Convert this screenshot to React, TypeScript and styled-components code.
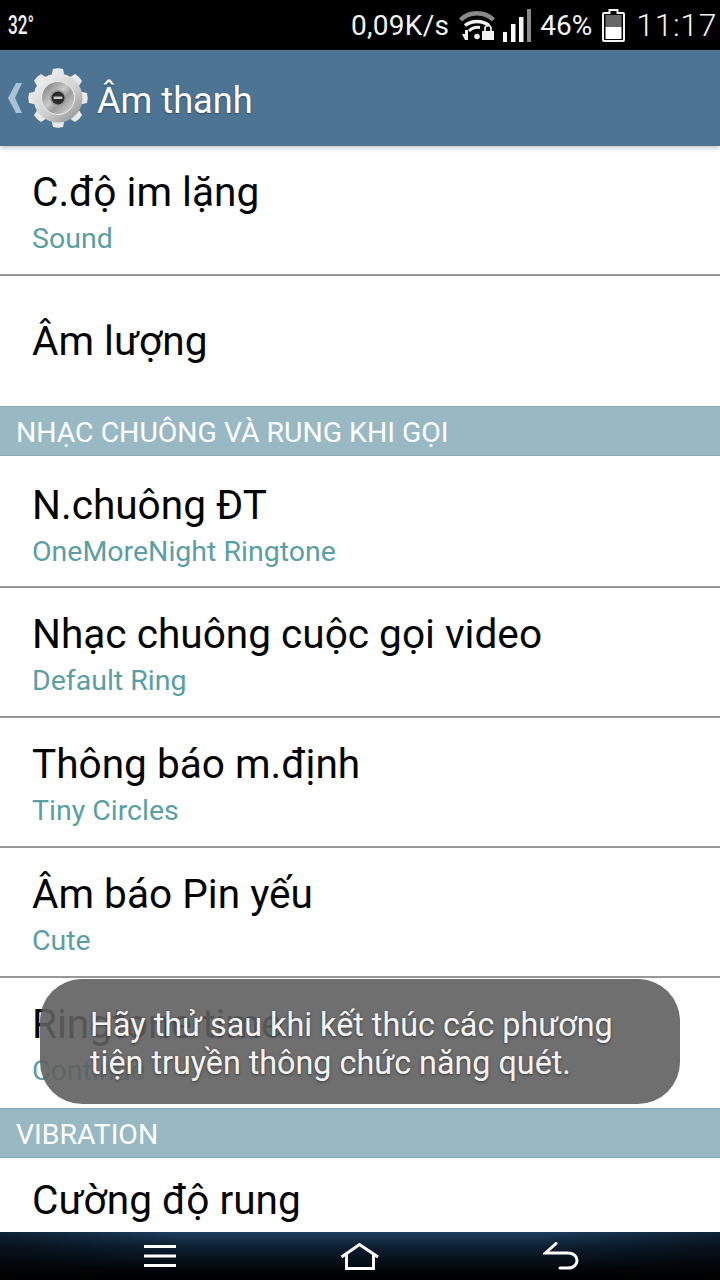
import React from "react";
import styled, { createGlobalStyle } from "styled-components";

const GlobalStyle = createGlobalStyle`
  html, body {
    margin: 0;
    padding: 0;
    background: #fff;
  }
  body {
    font-family: Roboto, "Noto Sans", sans-serif;
  }
`;

const Screen = styled.div`
  position: relative;
  display: flex;
  flex-direction: column;
  width: 720px;
  height: 1280px;
  overflow: hidden;
  background: #fff;
`;

const StatusBar = styled.div`
  display: flex;
  align-items: center;
  height: 50px;
  padding: 0 3px 0 8px;
  box-sizing: border-box;
  background: #000;
  color: #f2f2f2;
`;

const Temperature = styled.span`
  display: inline-block;
  font-size: 26px;
  font-weight: 500;
  transform: scaleX(0.66);
  transform-origin: left center;
  margin-right: auto;
`;

const NetSpeed = styled.span`
  font-size: 28px;
  letter-spacing: 0.3px;
`;

const Percent = styled.span`
  font-size: 28px;
  margin-left: 9px;
`;

const Clock = styled.span`
  font-size: 32px;
  font-weight: 300;
  letter-spacing: 0.6px;
  margin-left: 11px;
`;

const StatusIcon = styled.span<{ $left: number }>`
  display: flex;
  margin-left: ${(props) => props.$left}px;
`;

const ActionBar = styled.div`
  position: relative;
  z-index: 1;
  display: flex;
  align-items: center;
  height: 96px;
  padding-left: 8px;
  box-sizing: border-box;
  background: #4e7493;
  box-shadow: 0 1px 6px rgba(0, 0, 0, 0.3);
`;

const GearSlot = styled.span`
  display: flex;
  margin-left: 4px;
`;

const ActionTitle = styled.h1`
  margin: 4px 0 0 7px;
  font-size: 36.2px;
  font-weight: 400;
  color: #fff;
  text-shadow: 0 1px 2px rgba(0, 0, 0, 0.4);
`;

const List = styled.div`
  flex: 1;
  overflow: hidden;
`;

const Row = styled.div<{ $height: number; $top: number; $noDivider?: boolean }>`
  display: flex;
  flex-direction: column;
  height: ${(props) => props.$height}px;
  padding: ${(props) => props.$top}px 0 0 32px;
  box-sizing: border-box;
  border-bottom: ${(props) => (props.$noDivider ? "0" : "2px solid #979797")};
`;

const RowTitle = styled.div`
  font-size: 40.6px;
  line-height: 50px;
  color: #050505;
`;

const RowValue = styled.div`
  font-size: 28.5px;
  line-height: 36px;
  margin-top: 4px;
  color: #5a9fa3;
`;

const SectionHeader = styled.div`
  height: 50px;
  padding: 8px 0 0 16px;
  box-sizing: border-box;
  background: #98b9c4;
  border-top: 1px solid #86a7b3;
  border-bottom: 1px solid #86a7b3;
  font-size: 28.4px;
  line-height: 36px;
  color: #fff;
`;

const Toast = styled.div`
  position: absolute;
  left: 40px;
  top: 979px;
  width: 640px;
  height: 125px;
  padding: 27px 50px 0;
  box-sizing: border-box;
  border-radius: 42px;
  background: rgba(95, 95, 95, 0.9);
  font-size: 32.3px;
  line-height: 38px;
  color: #f4f4f4;
  text-shadow: 0 1px 3px rgba(0, 0, 0, 0.5);
`;

const NavBar = styled.div`
  display: flex;
  align-items: center;
  height: 48px;
  background:
    linear-gradient(90deg, rgba(0, 0, 0, 0.45), transparent 25%, transparent 75%, rgba(0, 0, 0, 0.45)),
    linear-gradient(#1d3f60 0, #0d2032 30%, #03070b 75%, #000 100%);
`;

const NavSlot = styled.div<{ $left: number }>`
  display: flex;
  margin-left: ${(props) => props.$left}px;
`;

const GEAR_TEETH = [0, 45, 90, 135, 180, 225, 270, 315];

const Gear = () => (
  <svg width="64" height="64" viewBox="0 0 64 64">
    <defs>
      <linearGradient id="gearMetal" gradientUnits="userSpaceOnUse" x1="10" y1="6" x2="54" y2="58">
        <stop offset="0" stopColor="#f6f6f6" />
        <stop offset="0.55" stopColor="#d0d0d0" />
        <stop offset="1" stopColor="#8a8a8a" />
      </linearGradient>
      <linearGradient id="gearFace" x1="0" y1="0" x2="1" y2="1">
        <stop offset="0" stopColor="#6f6f6f" />
        <stop offset="0.45" stopColor="#c9c9c9" />
        <stop offset="0.6" stopColor="#9a9a9a" />
        <stop offset="1" stopColor="#e2e2e2" />
      </linearGradient>
    </defs>
    <g fill="url(#gearMetal)">
      {GEAR_TEETH.map((angle) => (
        <path
          key={angle}
          d="M25 12 L27 3 Q32 1.500 37 3 L39 12 Z"
          transform={`rotate(${angle} 32 32)`}
        />
      ))}
      <circle cx="32" cy="32" r="24.500" />
    </g>
    <circle cx="32" cy="32" r="16.500" fill="url(#gearFace)" stroke="#ececec" strokeWidth="1" />
    <circle cx="32" cy="32" r="8" fill="#9a9a9a" />
    <circle cx="32" cy="32" r="6.500" fill="#2c2c2c" />
    <rect x="27.500" y="30.500" width="9" height="2.500" rx="1" fill="#c8c8c8" />
  </svg>
);

const BackChevron = () => (
  <svg width="14" height="30" viewBox="0 0 14 30">
    <path d="M14 0H8L0 15l8 15h6L7 15z" fill="#a9c3d6" />
  </svg>
);

const WifiIcon = () => (
  <svg width="36" height="30" viewBox="0 0 36 30">
    <path d="M1.500 10C10 1 26 1 34.500 10" fill="none" stroke="#8a8a8a" strokeWidth="4.500" />
    <path d="M6 15.500c6.500-5.500 17.500-5.500 24 0" fill="none" stroke="#f2f2f2" strokeWidth="3.500" />
    <path d="M10 21c3-3 7-4 11-3.500" fill="none" stroke="#f2f2f2" strokeWidth="3" />
    <circle cx="18" cy="26.500" r="2.800" fill="#f2f2f2" />
    <path d="M6 20h3v10H6zM3 24h3v6z" fill="#f2f2f2" />
    <rect x="23" y="21" width="12" height="9" fill="#f2f2f2" />
    <path d="M26 21v-2.500a3 3 0 0 1 6 0V21" fill="none" stroke="#f2f2f2" strokeWidth="1.700" />
  </svg>
);

const SignalIcon = () => (
  <svg width="28" height="33" viewBox="0 0 28 33">
    <rect x="0" y="23" width="4" height="10" fill="#f6f6f6" />
    <rect x="8" y="15" width="4.500" height="18" fill="#f6f6f6" />
    <rect x="16" y="8" width="4.500" height="25" fill="#f6f6f6" />
    <rect x="24" y="0" width="4" height="33" fill="#8a8a8a" />
  </svg>
);

const BatteryIcon = () => (
  <svg width="23" height="33" viewBox="0 0 23 33">
    <path
      d="M7.500 1h8v3H21a1 1 0 0 1 1 1v26a1 1 0 0 1-1 1H2a1 1 0 0 1-1-1V5a1 1 0 0 1 1-1h5.500z"
      fill="#000"
      stroke="#f4f4f4"
      strokeWidth="2"
    />
    <rect x="3.500" y="6" width="16" height="12" fill="#666" />
    <rect x="3.500" y="18" width="16" height="12" fill="#fff" />
  </svg>
);

const MenuIcon = () => (
  <svg width="32" height="24" viewBox="0 0 32 24">
    <path d="M0 2.500h32M0 12h32M0 21.500h32" stroke="#fff" strokeWidth="3" strokeLinecap="round" />
  </svg>
);

const HomeIcon = () => (
  <svg width="40" height="28" viewBox="0 0 40 28">
    <path
      d="M1.500 15L19.500 2.500 38 15M6.500 12v14.500h27V12"
      fill="none"
      stroke="#fff"
      strokeWidth="3"
    />
  </svg>
);

const ReturnIcon = () => (
  <svg width="36" height="28" viewBox="0 0 36 28">
    <path
      d="M13 1.500L2.500 11H25C31 11 34 15 34 18.500S31 26 25 26H17"
      fill="none"
      stroke="#fff"
      strokeWidth="3"
      strokeLinecap="round"
    />
  </svg>
);

export default function App() {
  return (
    <Screen>
      <GlobalStyle />
      <StatusBar>
        <Temperature>32°</Temperature>
        <NetSpeed>0,09K/s</NetSpeed>
        <StatusIcon $left={10}>
          <WifiIcon />
        </StatusIcon>
        <StatusIcon $left={8}>
          <SignalIcon />
        </StatusIcon>
        <Percent>46%</Percent>
        <StatusIcon $left={10}>
          <BatteryIcon />
        </StatusIcon>
        <Clock>11:17</Clock>
      </StatusBar>
      <ActionBar>
        <BackChevron />
        <GearSlot>
          <Gear />
        </GearSlot>
        <ActionTitle>Âm thanh</ActionTitle>
      </ActionBar>
      <List>
        <Row $height={130} $top={21}>
          <RowTitle>C.độ im lặng</RowTitle>
          <RowValue>Sound</RowValue>
        </Row>
        <Row $height={130} $top={40} $noDivider>
          <RowTitle>Âm lượng</RowTitle>
        </Row>
        <SectionHeader>NHẠC CHUÔNG VÀ RUNG KHI GỌI</SectionHeader>
        <Row $height={132} $top={24}>
          <RowTitle>N.chuông ĐT</RowTitle>
          <RowValue>OneMoreNight Ringtone</RowValue>
        </Row>
        <Row $height={130} $top={21}>
          <RowTitle>Nhạc chuông cuộc gọi video</RowTitle>
          <RowValue>Default Ring</RowValue>
        </Row>
        <Row $height={130} $top={21}>
          <RowTitle>Thông báo m.định</RowTitle>
          <RowValue>Tiny Circles</RowValue>
        </Row>
        <Row $height={130} $top={21}>
          <RowTitle>Âm báo Pin yếu</RowTitle>
          <RowValue>Cute</RowValue>
        </Row>
        <Row $height={130} $top={21} $noDivider>
          <RowTitle>Ringtone time</RowTitle>
          <RowValue>Continue</RowValue>
        </Row>
        <SectionHeader>VIBRATION</SectionHeader>
        <Row $height={74} $top={17} $noDivider>
          <RowTitle>Cường độ rung</RowTitle>
        </Row>
      </List>
      <NavBar>
        <NavSlot $left={144}>
          <MenuIcon />
        </NavSlot>
        <NavSlot $left={164}>
          <HomeIcon />
        </NavSlot>
        <NavSlot $left={163}>
          <ReturnIcon />
        </NavSlot>
      </NavBar>
      <Toast>
        Hãy thử sau khi kết thúc các phương
        <br />
        tiện truyền thông chức năng quét.
      </Toast>
    </Screen>
  );
}
